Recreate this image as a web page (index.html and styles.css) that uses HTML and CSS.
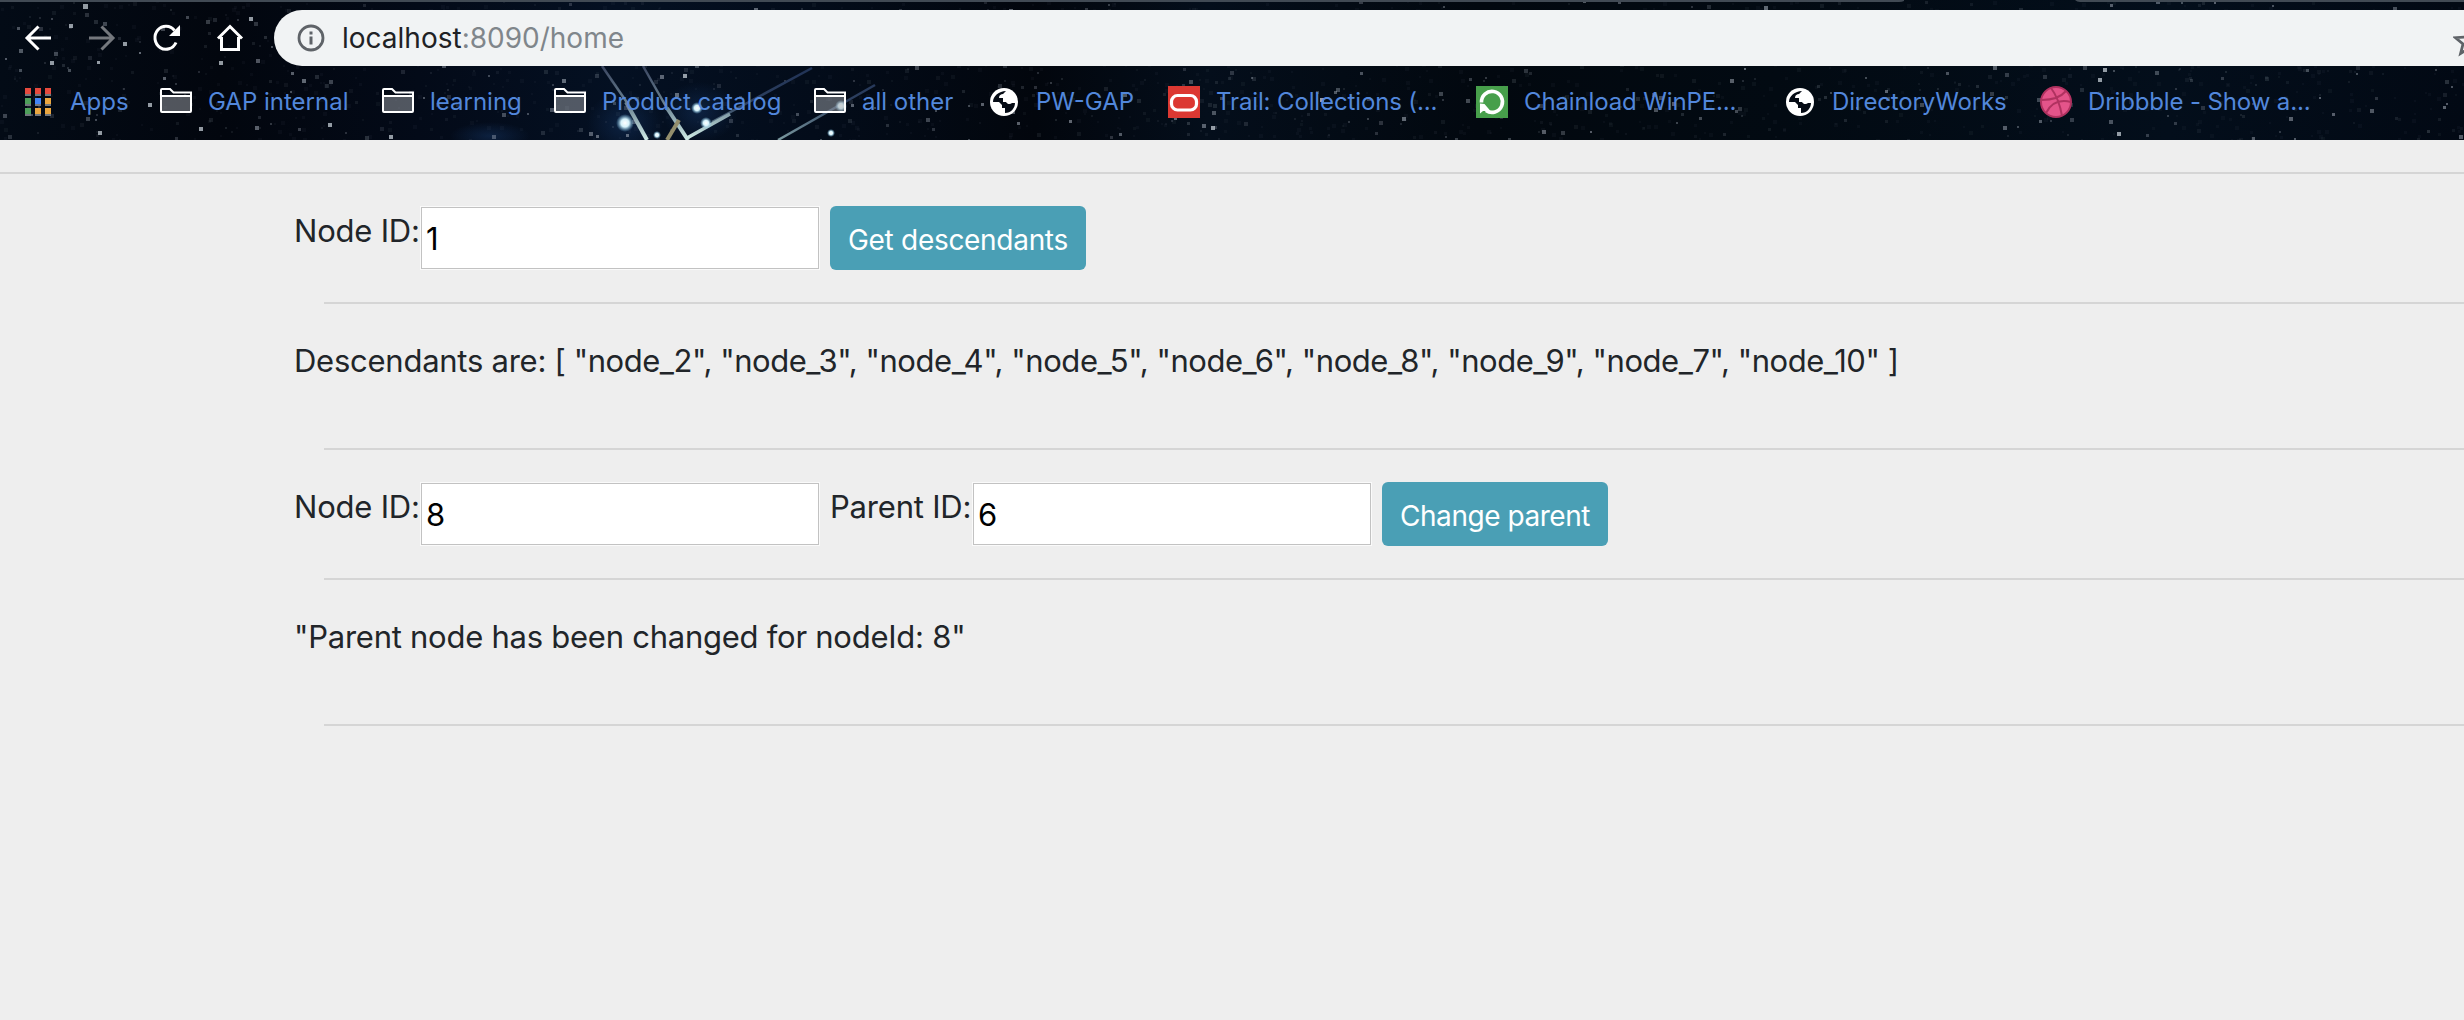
FILE: index.html
```html
<!DOCTYPE html>
<html lang="en">
<head>
<meta charset="utf-8">
<title>Nodes</title>
<link rel="stylesheet" href="styles.css">
</head>
<body>
<header class="browser">
  <svg class="sky" width="2464" height="140" viewBox="0 0 2464 140" aria-hidden="true">
    <defs>
      <linearGradient id="base" x1="0" x2="1" y1="0" y2="0">
        <stop offset="0" stop-color="#030b16"/><stop offset=".09" stop-color="#02060e"/><stop offset=".17" stop-color="#030a18"/><stop offset=".25" stop-color="#041022"/><stop offset=".33" stop-color="#030c1a"/><stop offset=".42" stop-color="#02060d"/><stop offset=".49" stop-color="#040e1b"/><stop offset=".6" stop-color="#02080f"/><stop offset=".72" stop-color="#020a12"/><stop offset=".88" stop-color="#030e1b"/><stop offset="1" stop-color="#020914"/>
      </linearGradient>
      <radialGradient id="glow"><stop offset="0" stop-color="#17396a" stop-opacity=".45"/><stop offset="1" stop-color="#17396a" stop-opacity="0"/></radialGradient>
      <radialGradient id="star"><stop offset="0" stop-color="#fff"/><stop offset=".45" stop-color="#d5f2fa"/><stop offset="1" stop-color="#6db4dc" stop-opacity="0"/></radialGradient>
      <linearGradient id="trail" x1="0" x2="0" y1="66" y2="140" gradientUnits="userSpaceOnUse"><stop offset="0" stop-color="#3a4560"/><stop offset=".55" stop-color="#6f8896"/><stop offset="1" stop-color="#d0ece6"/></linearGradient>
      <linearGradient id="faint" x1="0" x2="0" y1="66" y2="140" gradientUnits="userSpaceOnUse"><stop offset="0" stop-color="#1f3155"/><stop offset=".5" stop-color="#2e4160"/><stop offset="1" stop-color="#7c9aa0"/></linearGradient>
    </defs>
    <rect width="2464" height="140" fill="url(#base)"/>
    <ellipse cx="490" cy="136" rx="40" ry="14" fill="url(#glow)"/>
    <ellipse cx="625" cy="123" rx="38" ry="32" fill="url(#glow)"/>
    <ellipse cx="700" cy="112" rx="38" ry="30" fill="url(#glow)"/>
    <g id="stars"></g>
    <g fill="none" stroke="url(#trail)" stroke-width="2.5">
      <path d="M602 66l26 38"/><path d="M626 102l21 38" stroke-width="4"/>
      <path d="M643 66l25 44"/><path d="M667 108l21 32" stroke-width="4"/>
      <path d="M812 68l-100 54" stroke="url(#faint)"/><path d="M730 114l-43 24" stroke-width="3.5"/>
      <path d="M875 85l-97 55" stroke="url(#faint)"/><path d="M679 120l-12 20" stroke="#938e6c" stroke-width="4"/>
    </g>
    <g fill="url(#star)"><circle cx="625" cy="123" r="9"/><circle cx="697" cy="108" r="6"/><circle cx="706" cy="123" r="6"/><circle cx="657" cy="135" r="4"/><circle cx="831" cy="133" r="4"/><circle cx="841" cy="106" r="6"/></g>
    <path d="M0 0H1904v1q-2 1-5 1H0zM2075 0q2 2 5 2H2464V0z" fill="#414a54"/>
  </svg>
  <div class="toolbar">
    <svg width="32" height="32" viewBox="0 0 32 32" class="tool"><path d="M29 16H5M16.500 4.500L5 16l11.500 11.500" /></svg>
    <svg width="32" height="32" viewBox="0 0 32 32" class="tool dim"><path d="M3 16h24M15.500 4.500L27 16 15.500 27.500"/></svg>
    <svg width="32" height="32" viewBox="0 0 32 32" class="tool"><path d="M26 20.500A11 11.500 0 1 1 24.500 8.500"/><path d="M30 3v11H19z" class="solid"/></svg>
    <svg width="32" height="32" viewBox="0 0 32 32" class="tool"><path d="M4 16.500L16 4.500 28 16.500M7.500 15v12.500h17V15"/></svg>
    <div class="address">
      <svg width="28" height="28" viewBox="0 0 28 28" class="info"><circle cx="14" cy="14" r="12" fill="none" stroke="#5f6368" stroke-width="2.800"/><path d="M12.500 12.500h3v8h-3zM12.500 7.500h3v3h-3z" fill="#5f6368"/></svg>
      <span class="url">localhost<span class="path">:8090/home</span></span>
      <svg width="32" height="32" viewBox="0 0 32 32" class="fav"><path d="M16 3l3.700 9 9.800.7-7.500 6.300 2.400 9.500L16 23.400l-8.400 5.100L10 19 2.500 12.700l9.800-.7z"/></svg>
    </div>
  </div>
  <nav class="bookmarks">
    <a class="mark"><svg width="32" height="32" viewBox="0 0 32 32"><path d="M3 8h6v2H3zM13 8h6v2h-6zM23 8h6v2h-6zM3 18h6v2H3zM13 18h6v2h-6zM23 18h6v2h-6zM3 28h6v2H3zM13 28h6v2h-6zM23 28h6v2h-6z" fill="#71767c"/><path d="M3 2h6v6H3zM13 2h6v6h-6zM23 2h6v6h-6z" fill="#e64a3e"/><path d="M3 12h6v6H3zM3 22h6v6H3z" fill="#4f9f5b"/><path d="M13 12h6v6h-6z" fill="#4285f4"/><path d="M23 12h6v6h-6zM13 22h6v6h-6zM23 22h6v6h-6z" fill="#eaa640"/></svg><span>Apps</span></a>
    <a class="mark"><svg width="32" height="32"><use href="#folder"/></svg><span>GAP internal</span></a>
    <a class="mark"><svg width="32" height="32"><use href="#folder"/></svg><span>learning</span></a>
    <a class="mark"><svg width="32" height="32"><use href="#folder"/></svg><span>Product catalog</span></a>
    <a class="mark"><svg width="32" height="32"><use href="#folder"/></svg><span>all other</span></a>
    <a class="mark"><svg width="32" height="32"><use href="#globe"/></svg><span>PW-GAP</span></a>
    <a class="mark tight"><svg width="32" height="32" viewBox="0 0 32 32"><path d="M0 0h32v32H0z" fill="#dc3832"/><rect x="3.500" y="9.500" width="25" height="14.500" rx="6" fill="none" stroke="#fff" stroke-width="3.200"/></svg><span>Trail: Collections (...</span></a>
    <a class="mark tight"><svg width="32" height="32" viewBox="0 0 32 32"><path d="M0 0h32v32H0z" fill="#479f4b"/><path d="M5.500 16.500A10.500 10.500 0 1 1 10 24.500" fill="none" stroke="#fff" stroke-width="3.600"/><path d="M4 17.500v10l3-2.500h7.500l-6-7z" fill="#fff"/></svg><span>Chainload WinPE...</span></a>
    <a class="mark tight"><svg width="32" height="32"><use href="#globe"/></svg><span>DirectoryWorks</span></a>
    <a class="mark tight"><svg width="32" height="32" viewBox="0 0 32 32"><circle cx="16" cy="16" r="15" fill="#e4548a" stroke="#b03260" stroke-width="2"/><path d="M11 2c6 8 9 16 11 28M2 14c10 0 18-2 24-9M6 27c5-10 13-14 25-11" fill="none" stroke="#b03260" stroke-width="2"/></svg><span>Dribbble - Show a...</span></a>
  </nav>
</header>
<svg class="symbols" width="0" height="0">
  <symbol id="folder" viewBox="0 0 32 32"><path d="M1 9h30v17H1z" fill="#a0a4aa" fill-opacity=".5"/><path d="M2 6h9l3 3H2z" fill="#050b15"/><path d="M1 4q0-1 1-1h8l3.500 3.500H31V25q0 1-1 1H2q-1 0-1-1zM1 10h30" fill="none" stroke="#fff" stroke-width="2"/></symbol>
  <symbol id="globe" viewBox="0 0 32 32"><circle cx="16" cy="16" r="14" fill="#fff"/><path d="M18 5C11 5 5 10 5 16h6l3 3v3h3v5c6 0 10-5 10-10h-3c-2 2-5 1-6-1h-3v-4h-4c0-3 2-4 4-4z" fill="#050b15"/></symbol>
</svg>
<main class="page">
  <hr class="full">
  <div class="row"><label>Node ID:</label><input value="1"><button>Get descendants</button></div>
  <hr>
  <p class="result">Descendants are: <span class="list">[ "node_2", "node_3", "node_4", "node_5", "node_6", "node_8", "node_9", "node_7", "node_10" ]</span></p>
  <hr>
  <div class="row"><label>Node ID:</label><input value="8"><label class="second">Parent ID:</label><input value="6"><button class="change">Change parent</button></div>
  <hr>
  <p class="result">"Parent node has been changed for nodeId: 8"</p>
  <hr>
</main>
<script src="stars.js"></script>
</body>
</html>
```
FILE: styles.css
```css
* { box-sizing: border-box; }
body { margin: 0; height: 1020px; overflow: hidden; background: #eee; color: #212529; font-family: Inter, "Liberation Sans", sans-serif; }
.browser { position: relative; height: 140px; overflow: hidden; background: #030b16; }
.sky { position: absolute; inset: 0; display: block; }
.symbols { display: none; }
.toolbar { position: relative; display: flex; align-items: center; gap: 32px; height: 76px; padding-left: 22px; }
.tool { flex: none; fill: none; stroke: #fff; stroke-width: 3; }
.tool .solid { fill: #fff; stroke: none; }
.dim { opacity: .45; }
.address { flex: 1; display: flex; align-items: center; height: 56px; margin-left: -4px; padding-left: 23px; border-radius: 28px 0 0 28px; background: #f1f3f4; overflow: hidden; }
.info { flex: none; margin-right: 17px; }
.url { flex: 1; color: #202124; font-size: 28px; line-height: 34px; white-space: nowrap; }
.path { color: #80868b; }
.fav { flex: none; margin: 6px -21px 0 0; fill: none; stroke: #5f6368; stroke-width: 2.8; }
.bookmarks { position: relative; display: grid; grid-template-columns: 138px 222px 172px 260px 174px 180px 308px 308px 256px auto; padding: 10px 0 0 22px; }
.mark { display: flex; align-items: center; gap: 16px; height: 32px; color: #5287db; font-size: 24px; line-height: 32px; white-space: nowrap; }
.mark svg { flex: none; }
.tight { letter-spacing: -.13px; }
.page { padding-left: 294px; }
hr { height: 2px; margin: 0 0 0 30px; border: 0; background: #d5d5d5; }
.full { margin: 32px 0 0 -294px; }
.row { display: flex; align-items: flex-start; height: 128px; padding-top: 32px; font-size: 31px; }
label { width: 126px; line-height: 50px; letter-spacing: -.2px; white-space: nowrap; }
.second { width: 142px; margin-left: 10px; }
input { width: 400px; height: 64px; padding: 2px 4px; border: 2px solid #c2c2c2; outline: 1px solid #fafafa; outline-offset: -1px; border-radius: 0; background: #fff; color: #000; font: 31px Inter, sans-serif; }
button { height: 64px; margin-left: 10px; padding: 4px 18px 0; border: 0; border-radius: 6px; background: #4a9fb5; color: #fff; font: 28px Inter, sans-serif; letter-spacing: -.3px; white-space: nowrap; }
.change { letter-spacing: -.45px; }
.result { height: 144px; margin: 0; padding-top: 32px; font-size: 31px; line-height: 50px; letter-spacing: -.25px; white-space: nowrap; }
.list { letter-spacing: -.45px; }
```
FILE: stars.js
```js
// Scatter faint stars over the header, always in the same places.
let seed = 41;
const rnd = () => (seed = (seed * 16807) % 2147483647) / 2147483647;
let out = '';
for (let i = 0; i < 2000; i++) {
  const s = 2 + Math.floor(rnd() * 3);
  const a = Math.pow(rnd(), 7) * 0.5 + 0.04;
  out += `<rect x="${(rnd() * 2464).toFixed(0)}" y="${(rnd() * 140).toFixed(0)}" width="${s}" height="${s}" fill="#b4bcc8" opacity="${a.toFixed(2)}"/>`;
}
const bright = [[83, 4, 5], [69, 24, 4], [249, 17, 4], [123, 42, 4], [50, 61, 4], [97, 61, 3], [219, 61, 4], [148, 103, 4], [98, 131, 4], [199, 127, 4], [328, 123, 4], [389, 135, 4], [683, 74, 4], [1211, 126, 4], [1320, 98, 4], [2103, 68, 4], [2098, 78, 4], [2117, 132, 4]];
for (const [x, y, s] of bright) out += `<rect x="${x}" y="${y}" width="${s}" height="${s}" fill="#c4ccd4" opacity=".75"/>`;
document.getElementById('stars').innerHTML = out;
```
